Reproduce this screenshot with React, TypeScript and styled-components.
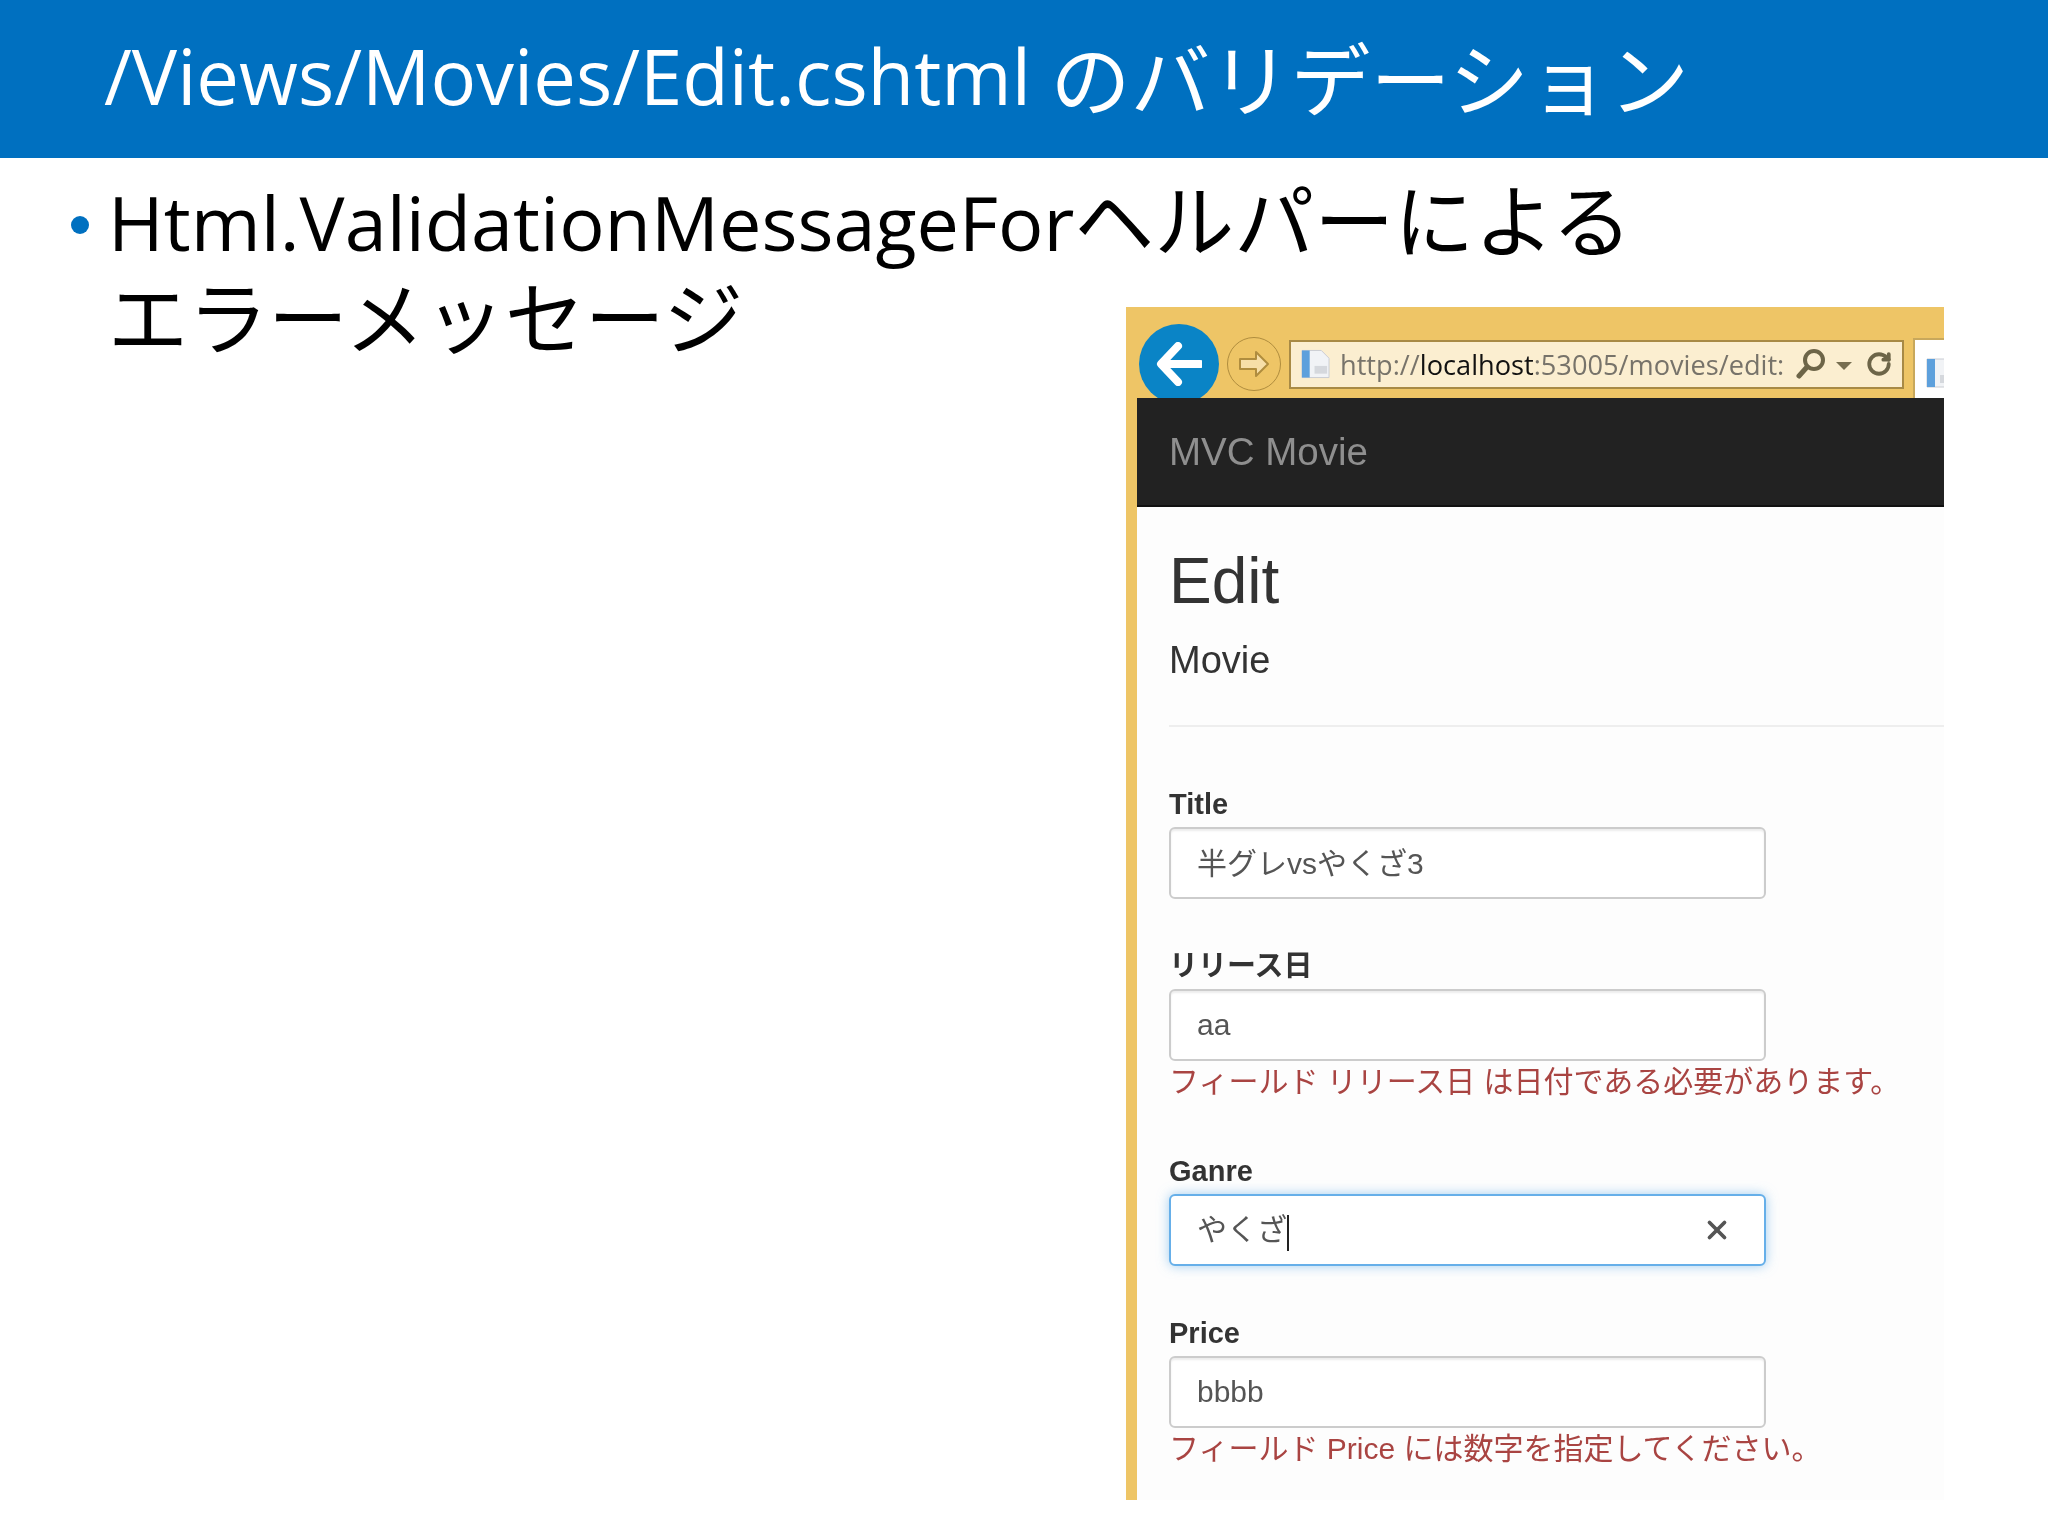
import React from 'react';
import styled, { createGlobalStyle } from 'styled-components';
import { RotateCw, X } from 'lucide-react';

const SLIDE_FONT = '"Open Sans", "Noto Sans CJK JP", sans-serif';
const PAGE_FONT = '"Liberation Sans", "Noto Sans CJK JP", sans-serif';

const GlobalStyle = createGlobalStyle`
    html, body {
        margin: 0;
        padding: 0;
        background: #fff;
    }
`;

const Slide = styled.div`
    width: 2048px;
    height: 1536px;
    overflow: hidden;
    background: #fff;
    font-family: ${SLIDE_FONT};
`;

const TitleBar = styled.header`
    box-sizing: border-box;
    height: 158px;
    padding: 0 0 8px 104px;
    display: flex;
    align-items: center;
    background: #0070c0;
    color: #fff;
    font-size: 76px;
    white-space: pre;
`;

const Ja = styled.span`
    font-size: 80px;
`;

const Body = styled.main`
    display: grid;
    grid-template-columns: 1fr;
`;

const BulletRow = styled.div`
    grid-area: 1 / 1;
    display: flex;
    padding: 14px 0 0 71px;
    color: #000;
    font-size: 75.6px;
    line-height: 95px;
`;

const BulletDot = styled.span`
    flex: none;
    width: 18px;
    height: 18px;
    margin: 44px 19px 0 0;
    border-radius: 50%;
    background: #0070c0;
`;

const BulletText = styled.div`
    white-space: nowrap;
`;

const Window = styled.section`
    grid-area: 1 / 1;
    justify-self: end;
    width: 818px;
    height: 1193px;
    margin: 149px 104px 0 0;
    overflow: hidden;
    background: #eec566;
    filter: blur(0.6px);
`;

const Toolbar = styled.div`
    box-sizing: border-box;
    height: 91px;
    padding: 23px 0 0 13px;
    display: flex;
    align-items: center;
    gap: 8px;
    overflow: hidden;
`;

const BackButton = styled.div`
    flex: none;
    width: 80px;
    height: 80px;
    display: flex;
    align-items: center;
    justify-content: center;
    border-radius: 50%;
    background: #0a84c6;
`;

const ForwardButton = styled.div`
    flex: none;
    width: 52px;
    height: 52px;
    display: flex;
    align-items: center;
    justify-content: center;
    border: 1px solid #b08d3e;
    border-radius: 50%;
`;

const AddressBar = styled.div`
    flex: none;
    box-sizing: border-box;
    width: 615px;
    height: 49px;
    padding: 0 10px;
    display: flex;
    align-items: center;
    background: #fbeed0;
    border: 2px solid #a88a45;
`;

const Url = styled.div`
    flex: none;
    width: 446px;
    margin-left: 10px;
    overflow: hidden;
    white-space: nowrap;
    color: #77736a;
    font-family: ${SLIDE_FONT};
    font-size: 27.2px;
    b {
        font-weight: 400;
        color: #111;
    }
`;

const AddressIcons = styled.div`
    display: flex;
    align-items: center;
    margin-left: 10px;
    gap: 10px;
    color: #6d6548;
`;

const Caret = styled.span`
    width: 0;
    height: 0;
    margin-top: 4px;
    border-left: 8px solid transparent;
    border-right: 8px solid transparent;
    border-top: 8px solid #776e50;
`;

const RefreshIcon = styled(RotateCw)`
    margin-left: 4px;
`;

const Tab = styled.div`
    flex: none;
    align-self: flex-end;
    box-sizing: border-box;
    width: 40px;
    height: 60px;
    margin-left: 1px;
    padding: 17px 0 0 11px;
    background: #fff;
    border: 2px solid #c8a85c;
    border-bottom: 0;
`;

const Viewport = styled.div`
    margin-left: 11px;
    height: 1102px;
    background: #fdfdfd;
    font-family: ${PAGE_FONT};
`;

const Navbar = styled.nav`
    height: 109px;
    padding-left: 32px;
    display: flex;
    align-items: center;
    box-sizing: border-box;
    background: #222;
    border-bottom: 2px solid #111;
    color: #8f8f8f;
    font-size: 38.5px;
`;

const Content = styled.div`
    padding-left: 32px;
`;

const PageTitle = styled.h2`
    margin: 42px 0 0;
    color: #333;
    font-size: 64px;
    font-weight: 400;
    line-height: 64px;
`;

const SubTitle = styled.h4`
    margin: 25px 0 0;
    color: #333;
    font-size: 38px;
    font-weight: 400;
    line-height: 44px;
`;

const Rule = styled.hr`
    margin: 43px 0 59px;
    height: 2px;
    border: 0;
    background: #eee;
`;

const Group = styled.div`
    margin-bottom: 49px;
`;

const Label = styled.label`
    display: block;
    margin-bottom: 5px;
    color: #333;
    font-size: 29px;
    font-weight: 700;
    line-height: 36px;
`;

const Field = styled.div<{ $ja?: boolean; $focus?: boolean }>`
    box-sizing: border-box;
    width: 597px;
    height: 72px;
    padding: 0 26px ${(props) => (props.$ja ? '4px' : '0')};
    display: flex;
    align-items: center;
    justify-content: space-between;
    background: #fff;
    border: 2px solid ${(props) => (props.$focus ? '#66afe9' : '#ccc')};
    border-radius: 6px;
    box-shadow: ${(props) => (props.$focus ? '0 0 12px rgba(102, 175, 233, 0.6)' : 'inset 0 2px 2px rgba(0, 0, 0, 0.075)')};
    color: #555;
    font-size: 30px;
`;

const Cursor = styled.span`
    display: inline-block;
    width: 2px;
    height: 36px;
    vertical-align: middle;
    background: #222;
`;

const ClearIcon = styled(X)`
    margin: 4px 6px 0 0;
    color: #555;
`;

const ErrorText = styled.div`
    margin-top: 3px;
    padding-bottom: 4px;
    color: #a94442;
    font-size: 30px;
    line-height: 36px;
    white-space: nowrap;
`;

const PageIcon = () => (
    <svg width="30" height="32" viewBox="0 0 30 32">
        <path d="M1 2h20l8 8v20H1z" fill="#f1f3f6" stroke="#c9ccd2" />
        <rect x="1" y="2" width="8" height="28" fill="#5da0dc" />
        <rect x="14" y="18" width="13" height="8" fill="#d5d8dd" />
    </svg>
);

const BackArrow = () => (
    <svg width="46" height="44" viewBox="0 0 46 44">
        <path d="M22 4L5 22l17 18M6 22h38" fill="none" stroke="#fff" strokeWidth="8" strokeLinecap="round" strokeLinejoin="round" />
    </svg>
);

const ForwardArrow = () => (
    <svg width="32" height="30" viewBox="0 0 32 30">
        <path d="M18 3l12 12-12 12v-7H2V10h16z" fill="#f7dfa8" stroke="#b08d3e" strokeWidth="2" strokeLinejoin="round" />
    </svg>
);

const SearchGlass = () => (
    <svg width="30" height="32" viewBox="0 0 30 32">
        <circle cx="18" cy="12" r="9" fill="none" stroke="#6d6548" strokeWidth="4" />
        <path d="M11 19L3 28" stroke="#6d6548" strokeWidth="5" strokeLinecap="round" />
    </svg>
);

export default function App() {
    return (
        <Slide>
            <GlobalStyle />
            <TitleBar>
                /Views/Movies/Edit.cshtml <Ja>のバリデーション</Ja>
            </TitleBar>
            <Body>
                <BulletRow>
                    <BulletDot />
                    <BulletText>
                        Html.ValidationMessageFor<Ja>ヘルパーによる</Ja>
                        <br />
                        <Ja>エラーメッセージ</Ja>
                    </BulletText>
                </BulletRow>
                <Window>
                    <Toolbar>
                        <BackButton>
                            <BackArrow />
                        </BackButton>
                        <ForwardButton>
                            <ForwardArrow />
                        </ForwardButton>
                        <AddressBar>
                            <PageIcon />
                            <Url>
                                http://<b>localhost</b>:53005/movies/edit:
                            </Url>
                            <AddressIcons>
                                <SearchGlass />
                                <Caret />
                                <RefreshIcon size={26} strokeWidth={3.5} />
                            </AddressIcons>
                        </AddressBar>
                        <Tab>
                            <PageIcon />
                        </Tab>
                    </Toolbar>
                    <Viewport>
                        <Navbar>MVC Movie</Navbar>
                        <Content>
                            <PageTitle>Edit</PageTitle>
                            <SubTitle>Movie</SubTitle>
                            <Rule />
                            <Group>
                                <Label>Title</Label>
                                <Field $ja>半グレvsやくざ3</Field>
                            </Group>
                            <Group>
                                <Label>リリース日</Label>
                                <Field>aa</Field>
                                <ErrorText>フィールド リリース日 は日付である必要があります。</ErrorText>
                            </Group>
                            <Group>
                                <Label>Ganre</Label>
                                <Field $ja $focus>
                                    <span>
                                        やくざ
                                        <Cursor />
                                    </span>
                                    <ClearIcon size={30} strokeWidth={3} />
                                </Field>
                            </Group>
                            <Group>
                                <Label>Price</Label>
                                <Field>bbbb</Field>
                                <ErrorText>フィールド Price には数字を指定してください。</ErrorText>
                            </Group>
                        </Content>
                    </Viewport>
                </Window>
            </Body>
        </Slide>
    );
}
